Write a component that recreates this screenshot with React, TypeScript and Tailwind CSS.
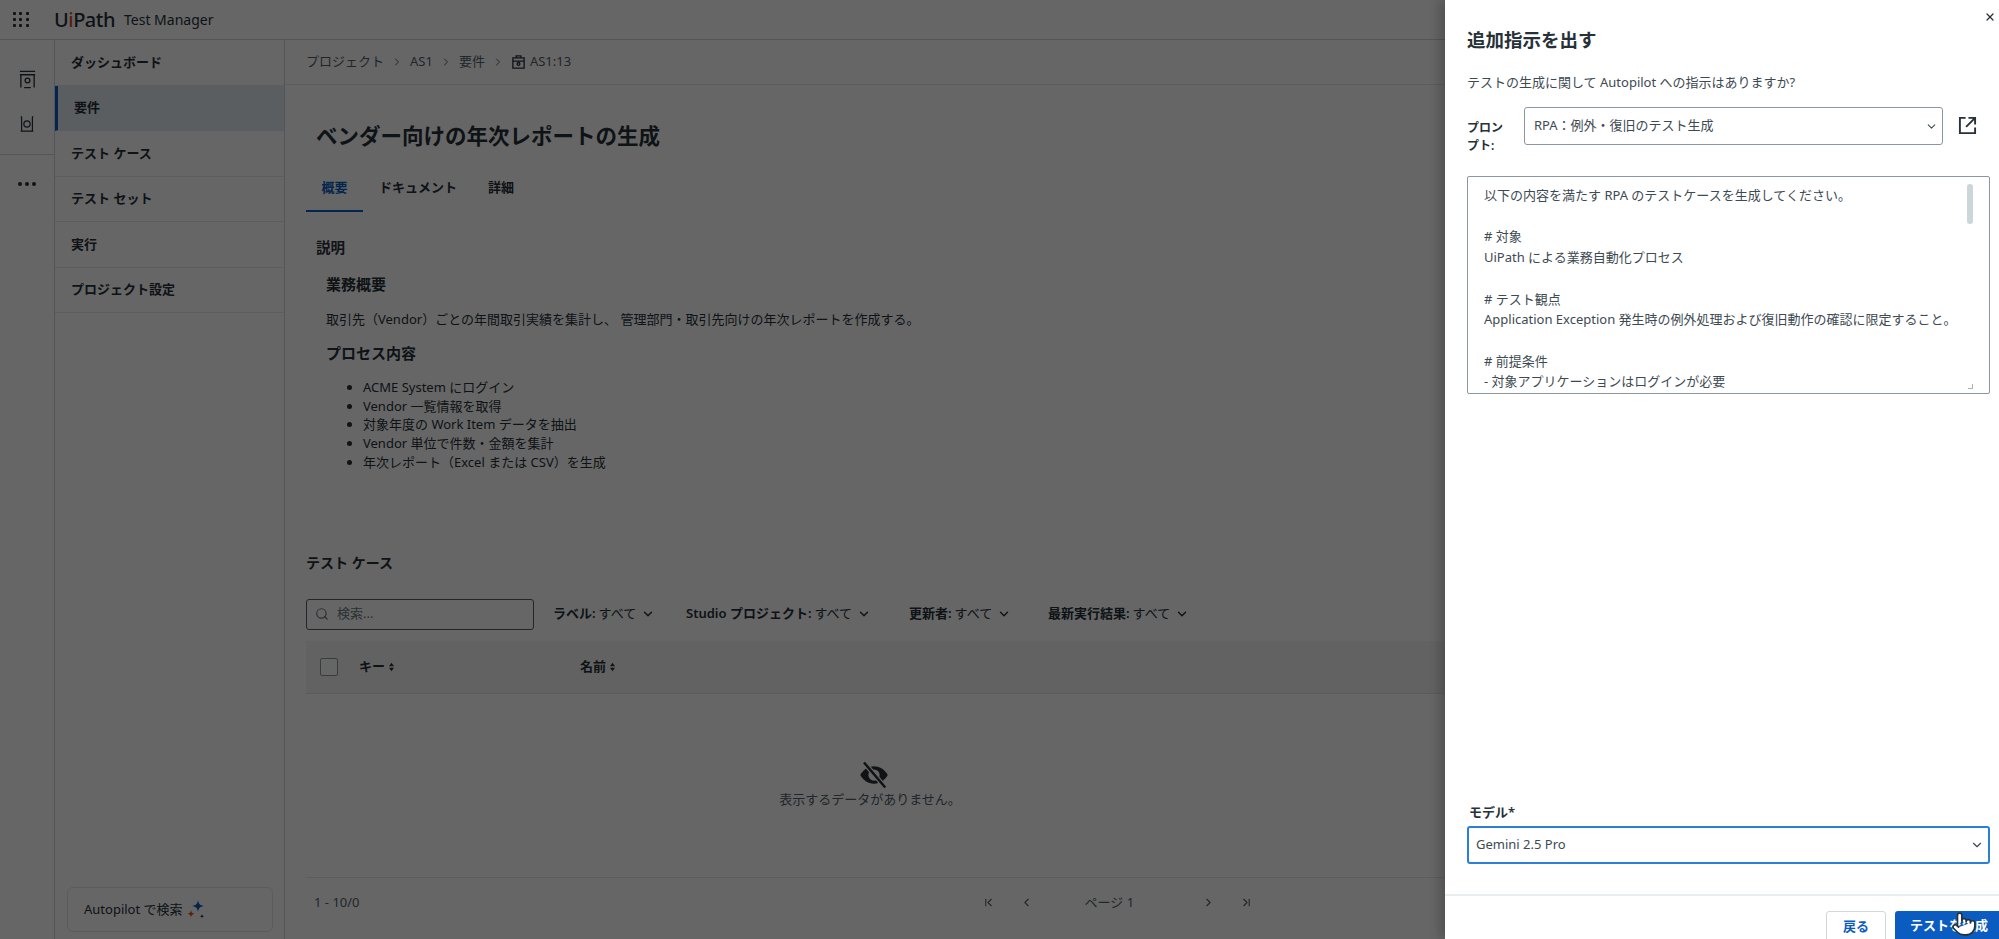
import { ChevronDown, ChevronFirst, ChevronLast, ChevronLeft, ChevronRight, Pointer, Search, X } from "lucide-react";

const navItems = ["ダッシュボード", "要件", "テスト ケース", "テスト セット", "実行", "プロジェクト設定"];

const filters = [
  { label: "ラベル:", width: "w-[133px]" },
  { label: "Studio プロジェクト:", width: "w-[223px]" },
  { label: "更新者:", width: "w-[139px]" },
  { label: "最新実行結果:", width: "w-[150px]" },
];

const steps = ["ACME System にログイン", "Vendor 一覧情報を取得", "対象年度の Work Item データを抽出", "Vendor 単位で件数・金額を集計", "年次レポート（Excel または CSV）を生成"];

const promptText = `以下の内容を満たす RPA のテストケースを生成してください。

# 対象
UiPath による業務自動化プロセス

# テスト観点
Application Exception 発生時の例外処理および復旧動作の確認に限定すること。

# 前提条件
- 対象アプリケーションはログインが必要`;

const SortIcon = () => (
  <svg viewBox="0 0 8 12" className="h-[10px] w-[7px] fill-current">
    <path d="M4 1 7 5H1zM4 11 1 7h6z" />
  </svg>
);

const Sparkles = () => (
  <svg viewBox="0 0 20 22" className="h-[22px] w-[20px]">
    <path d="M11 1c.6 4 2 5.400 6 6-4 .6-5.400 2-6 6-.6-4-2-5.400-6-6 4-.6 5.400-2 6-6z" fill="#0b5cc0" />
    <path d="M4 11c.3 2.400 1.300 3.400 3.500 3.800C5.300 15.200 4.300 16.200 4 18.500c-.3-2.300-1.300-3.300-3.500-3.700C2.700 14.400 3.700 13.400 4 11z" fill="#e0561b" />
    <path d="M15 15c.2 1.500.8 2 2.200 2.300-1.400.3-2 .8-2.200 2.200-.2-1.400-.8-1.900-2.200-2.200 1.400-.3 2-.8 2.200-2.300z" fill="#273139" />
  </svg>
);

export default function App() {
  return (
    <div className="relative flex h-screen flex-col overflow-hidden bg-white font-['Noto_Sans','Noto_Sans_CJK_JP',sans-serif] text-[13px] text-[#273139]">
      <header className="flex h-[40px] shrink-0 items-center border-b border-[#cfd8dd]">
        <div className="ml-[13px] grid w-[16px] grid-cols-3 gap-[3px]">
          {Array.from({ length: 9 }).map((_, i) => (
            <span key={i} className="h-[3px] w-[3px] rounded-[1px] bg-[#273139]" />
          ))}
        </div>
        <span className="ml-[25px] text-[20px] leading-none font-medium tracking-[-0.5px]">
          U<span className="text-[#e0561b]">i</span>Path
        </span>
        <span className="ml-[9px] text-[14px] leading-none">Test Manager</span>
      </header>

      <div className="flex min-h-0 flex-1">
        <div className="flex w-[55px] shrink-0 flex-col items-center border-r border-[#cfd8dd]">
          <div className="flex h-[115px] w-full flex-col items-center gap-[26px] border-b border-[#cfd8dd] pt-[30px]">
            <svg viewBox="0 0 20 20" className="h-[19px] w-[19px] fill-none stroke-[#273139] stroke-[1.400]">
              <path d="M2 1.500h16M2 5h16M3 5v13.500M17 5v13.500M6.500 18.500h7" />
              <circle cx="10" cy="11" r="2.500" />
            </svg>
            <svg viewBox="0 0 20 20" className="h-[18px] w-[18px] fill-none stroke-[#273139] stroke-[1.400]">
              <path d="M3 2h1.500M15.500 2H17M3 18h14M4 2v16M16 2v16" />
              <circle cx="10" cy="10" r="3.500" />
            </svg>
          </div>
          <div className="mt-[27px] flex gap-[3px]">
            <span className="h-[4px] w-[4px] rounded-full bg-[#273139]" />
            <span className="h-[4px] w-[4px] rounded-full bg-[#273139]" />
            <span className="h-[4px] w-[4px] rounded-full bg-[#273139]" />
          </div>
        </div>

        <aside className="flex w-[230px] shrink-0 flex-col border-r border-[#cfd8dd]">
          <nav className="flex-1">
            {navItems.map((item) => (
              <div
                key={item}
                className={`flex h-[45.500px] items-center border-b border-[#e3e8ea] pl-[16px] font-semibold ${
                  item === "要件" ? "border-l-[3px] border-l-[#0b5cc0] bg-[#e3eaf2] pl-[13px]" : ""
                }`}
              >
                {item}
              </div>
            ))}
          </nav>
          <div className="mb-[7px] ml-[12px] flex h-[45px] w-[206px] items-center gap-[4px] rounded-[6px] border border-[#dfe5e8] pl-[16px]">
            <span>Autopilot で検索</span>
            <Sparkles />
          </div>
        </aside>

        <main className="flex min-w-0 flex-1 flex-col">
          <div className="flex h-[45px] shrink-0 items-center gap-[7px] border-b border-[#e3e8ea] pl-[21px] text-[#526069]">
            <span>プロジェクト</span>
            <ChevronRight className="h-[12px] w-[12px]" />
            <span>AS1</span>
            <ChevronRight className="h-[12px] w-[12px]" />
            <span>要件</span>
            <ChevronRight className="h-[12px] w-[12px]" />
            <svg viewBox="0 0 16 16" className="h-[16px] w-[15px] fill-none stroke-[#273139] stroke-[1.400]">
              <path d="M5.500 3.500V1.500h5v2M2 3.500h12v11H2zM2 7h12" />
              <circle cx="8" cy="10" r="1.500" />
            </svg>
            <span className="-ml-[3px]">AS1:13</span>
          </div>

          <div className="flex min-h-0 flex-1 flex-col pl-[21px]">
            <h1 className="mt-[35px] pl-[10px] text-[21.500px] leading-[32px] font-semibold">ベンダー向けの年次レポートの生成</h1>

            <div className="mt-[26px] flex h-[34px] font-semibold">
              <div className="flex w-[57px] justify-center border-b-[2px] border-[#0b5cc0] text-[#0b5cc0]">概要</div>
              <div className="ml-[16px]">ドキュメント</div>
              <div className="ml-[31px]">詳細</div>
            </div>

            <div className="mt-[24px] pl-[10px] text-[14.500px] leading-[22px] font-semibold">説明</div>
            <div className="pl-[20px]">
              <h2 className="mt-[15px] text-[15px] leading-[22px] font-semibold">業務概要</h2>
              <p className="mt-[14px] leading-[20px]">取引先（Vendor）ごとの年間取引実績を集計し、 管理部門・取引先向けの年次レポートを作成する。</p>
              <h2 className="mt-[13px] text-[15px] leading-[22px] font-semibold">プロセス内容</h2>
              <ul className="mt-[14px] list-disc pl-[37px] leading-[18.700px]">
                {steps.map((step) => (
                  <li key={step}>{step}</li>
                ))}
              </ul>
            </div>

            <h2 className="mt-[81px] text-[14px] leading-[20px] font-semibold">テスト ケース</h2>

            <div className="mt-[26px] flex h-[31px] shrink-0 items-center">
              <div className="flex h-[31px] w-[228px] items-center gap-[8px] rounded-[3px] border border-[#526069] pl-[8px] text-[#6b7882]">
                <Search className="h-[14px] w-[14px]" />
                <span>検索...</span>
              </div>
              <div className="ml-[19px] flex items-center">
                {filters.map((f) => (
                  <div key={f.label} className={`flex items-center gap-[5px] ${f.width}`}>
                    <span className="font-semibold">{f.label}</span>
                    <span className="-ml-[2px]">すべて</span>
                    <ChevronDown className="h-[14px] w-[14px] stroke-[2.500]" />
                  </div>
                ))}
              </div>
            </div>

            <div className="mt-[11px] flex h-[53px] shrink-0 items-center border-b border-[#dfe5e8] bg-[#f4f6f7] font-semibold">
              <span className="ml-[14px] h-[18px] w-[18px] rounded-[2px] border border-[#8a97a0] bg-white" />
              <div className="ml-[21px] flex w-[221px] items-center gap-[3px]">
                キー <SortIcon />
              </div>
              <div className="flex items-center gap-[3px]">
                名前 <SortIcon />
              </div>
            </div>

            <div className="flex h-[184px] shrink-0 flex-col items-center justify-center border-b border-[#e3e8ea] pr-[565px]">
              <svg viewBox="0 0 24 24" className="ml-[8px] h-[30px] w-[30px]">
                <path d="M12 5c5 0 9 3.200 11 7-2 3.800-6 7-11 7S3 15.800 1 12c2-3.800 6-7 11-7z" fill="#273139" />
                <circle cx="12" cy="12" r="4.500" fill="#ffffff" />
                <path d="M4 2 21 22" stroke="#ffffff" strokeWidth="4" />
                <path d="M4 2 21 22" stroke="#273139" strokeWidth="2" />
              </svg>
              <span className="text-[#526069]">表示するデータがありません。</span>
            </div>

            <div className="flex h-[50px] shrink-0 items-center text-[#526069]">
              <span className="ml-[8px]">1 - 10/0</span>
              <div className="ml-[622px] flex items-center">
                <ChevronFirst className="h-[13px] w-[13px]" />
                <ChevronLeft className="ml-[25px] h-[13px] w-[13px]" />
                <span className="ml-[52px] w-[60px]">ページ 1</span>
                <ChevronRight className="ml-[57px] h-[13px] w-[13px]" />
                <ChevronLast className="ml-[25px] h-[13px] w-[13px]" />
              </div>
            </div>
          </div>
        </main>
      </div>

      {/* dim layer under the drawer */}
      <div className="absolute inset-0 bg-black/60" />

      <section className="absolute top-0 right-0 bottom-0 flex w-[554px] flex-col bg-white shadow-[-6px_0_10px_rgba(0,0,0,0.2)]">
        <X className="absolute top-[11px] right-[3px] h-[12px] w-[12px] stroke-[2.500]" />
        <h2 className="mt-[25px] pl-[22px] text-[18.500px] leading-[30px] font-semibold">追加指示を出す</h2>
        <p className="mt-[17px] pl-[22px] leading-[20px] text-[#3d4a52]">テストの生成に関して Autopilot への指示はありますか?</p>

        <div className="mt-[15px] flex items-start pl-[22px]">
          <label className="mt-[12px] w-[57px] pr-[10px] text-[12px] leading-[18px] font-semibold">プロンプト:</label>
          <div className="flex h-[38px] w-[419px] items-center justify-between rounded-[3px] border border-[#8a97a0] pr-[4px] pl-[9px] text-[#3d4a52]">
            <span>RPA：例外・復旧のテスト生成</span>
            <ChevronDown className="h-[13px] w-[13px]" />
          </div>
          <svg viewBox="0 0 20 20" className="mt-[9px] ml-[15px] h-[19px] w-[19px] fill-none stroke-[#273139] stroke-[2]">
            <path d="M8 2H2v16h16v-6M11 2h7v7M18 2 8.500 11.500" />
          </svg>
        </div>

        <div className="relative mt-[21px] ml-[22px] h-[218px] w-[523px] overflow-hidden rounded-[2px] border border-[#8a97a0] pt-[8px] pl-[16px]">
          <div className="leading-[20.700px] whitespace-pre-wrap text-[#3d4a52]">{promptText}</div>
          <span className="absolute top-[7px] right-[16px] h-[40px] w-[6px] rounded-[3px] bg-[#ccd6da]" />
          <span className="absolute right-[16px] bottom-[4px] h-[5px] w-[5px] border-r border-b border-[#a9b4ba]" />
        </div>

        <div className="mt-auto pl-[24px] text-[13px] leading-[20px] font-semibold">モデル*</div>
        <div className="mt-[4px] ml-[22px] flex h-[38px] w-[523px] shrink-0 items-center justify-between rounded-[3px] border-[2px] border-[#2b7fd4] pr-[4px] pl-[7px] text-[#3d4a52]">
          <span>Gemini 2.5 Pro</span>
          <ChevronDown className="h-[14px] w-[14px]" />
        </div>

        <div className="mt-[30px] flex h-[45px] shrink-0 justify-end gap-[9px] overflow-hidden border-t-[2px] border-[#e8edef] pt-[15px] font-semibold">
          <div className="flex h-[36px] w-[60px] justify-center rounded-[3px] border border-[#cfd8dd] pt-[5px] text-[#0b5cc0]">戻る</div>
          <div className="flex h-[36px] w-[104px] rounded-l-[3px] bg-[#0b5cc0] pt-[5px] pl-[15px] text-white">テストを生成</div>
        </div>

        <Pointer className="absolute top-[911px] left-[506px] h-[26px] w-[26px] fill-white stroke-[#273139] stroke-[1.500]" />
      </section>
    </div>
  );
}
